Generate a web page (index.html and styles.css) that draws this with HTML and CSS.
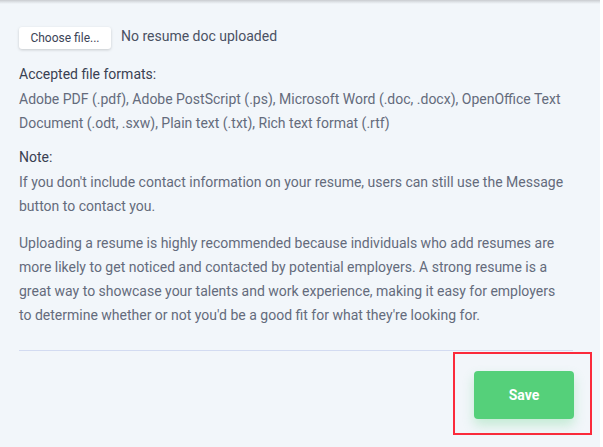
FILE: index.html
```html
<!DOCTYPE html>
<html>
<head>
<meta charset="utf-8">
<link rel="stylesheet" href="styles.css">
</head>
<body>
<div class="page">
  <div class="topshade"></div>
  <div class="content">
    <div class="upload-row">
      <button class="choose">Choose file...</button>
      <span class="status">No resume doc uploaded</span>
    </div>
    <div class="block">
      <div class="label">Accepted file formats:</div>
      <p class="text">Adobe PDF (.pdf), Adobe PostScript (.ps), Microsoft Word (.doc, .docx), OpenOffice Text Document (.odt, .sxw), Plain text (.txt), Rich text format (.rtf)</p>
    </div>
    <div class="block note">
      <div class="label">Note:</div>
      <p class="text">If you don't include contact information on your resume, users can still use the Message button to contact you.</p>
    </div>
    <p class="text para">Uploading a resume is highly recommended because individuals who add resumes are more likely to get noticed and contacted by potential employers. A strong resume is a great way to showcase your talents and work experience, making it easy for employers to determine whether or not you'd be a good fit for what they're looking for.</p>
    <div class="divider"></div>
    <div class="actions">
      <div class="highlight">
        <button class="save">Save</button>
      </div>
    </div>
  </div>
</div>
</body>
</html>
```

FILE: styles.css
```css
* { box-sizing: border-box; }
html, body { margin: 0; padding: 0; }
body {
  background: #f2f6fa;
  font-family: Roboto, "Liberation Sans", sans-serif;
  width: 603px;
  height: 447px;
  overflow: hidden;
}
.page {
  position: relative;
  height: 447px;
  border-right: 3px solid #ffffff;
}
.topshade {
  height: 4px;
  background: linear-gradient(#c9cbcf, #dfe3e7 50%, #f2f6fa);
}
.content {
  padding: 23px 27px 0 19px;
}
.upload-row {
  display: flex;
  align-items: center;
  gap: 10px;
}
.choose {
  font-family: Roboto, "Liberation Sans", sans-serif;
  font-size: 12px;
  color: #3b4356;
  background: #ffffff;
  border: none;
  border-radius: 3px;
  height: 22px;
  width: 92px;
  padding: 0;
  box-shadow: 0 1px 3px rgba(0, 0, 0, 0.18);
}
.status {
  font-size: 14px;
  color: #4a5163;
  position: relative;
  top: -2px;
}
.block { margin-top: 15px; }
.label {
  font-size: 14px;
  color: #3a4152;
  line-height: 20px;
}
.text {
  margin: 0;
  padding-right: 5px;
  font-size: 14px;
  line-height: 24px;
  color: #646b7c;
}
.block .text { margin-top: 3px; }
.note { margin-top: 12px; }
.para { margin-top: 13px; }
.divider {
  margin-top: 23px;
  height: 1px;
  background: #d3dbf1;
}
.actions {
  display: flex;
  justify-content: flex-end;
  margin-right: -19px;
  margin-top: 1px;
}
.highlight {
  border: 2px solid #fb2a3b;
  padding: 17px 16px 14px 19px;
}
.save {
  width: 100px;
  height: 48px;
  border: none;
  border-radius: 4px;
  background: #55d07a;
  color: #ffffff;
  font-family: Roboto, "Liberation Sans", sans-serif;
  font-size: 14px;
  font-weight: bold;
  box-shadow: 0 6px 12px rgba(85, 208, 122, 0.3);
}
```
